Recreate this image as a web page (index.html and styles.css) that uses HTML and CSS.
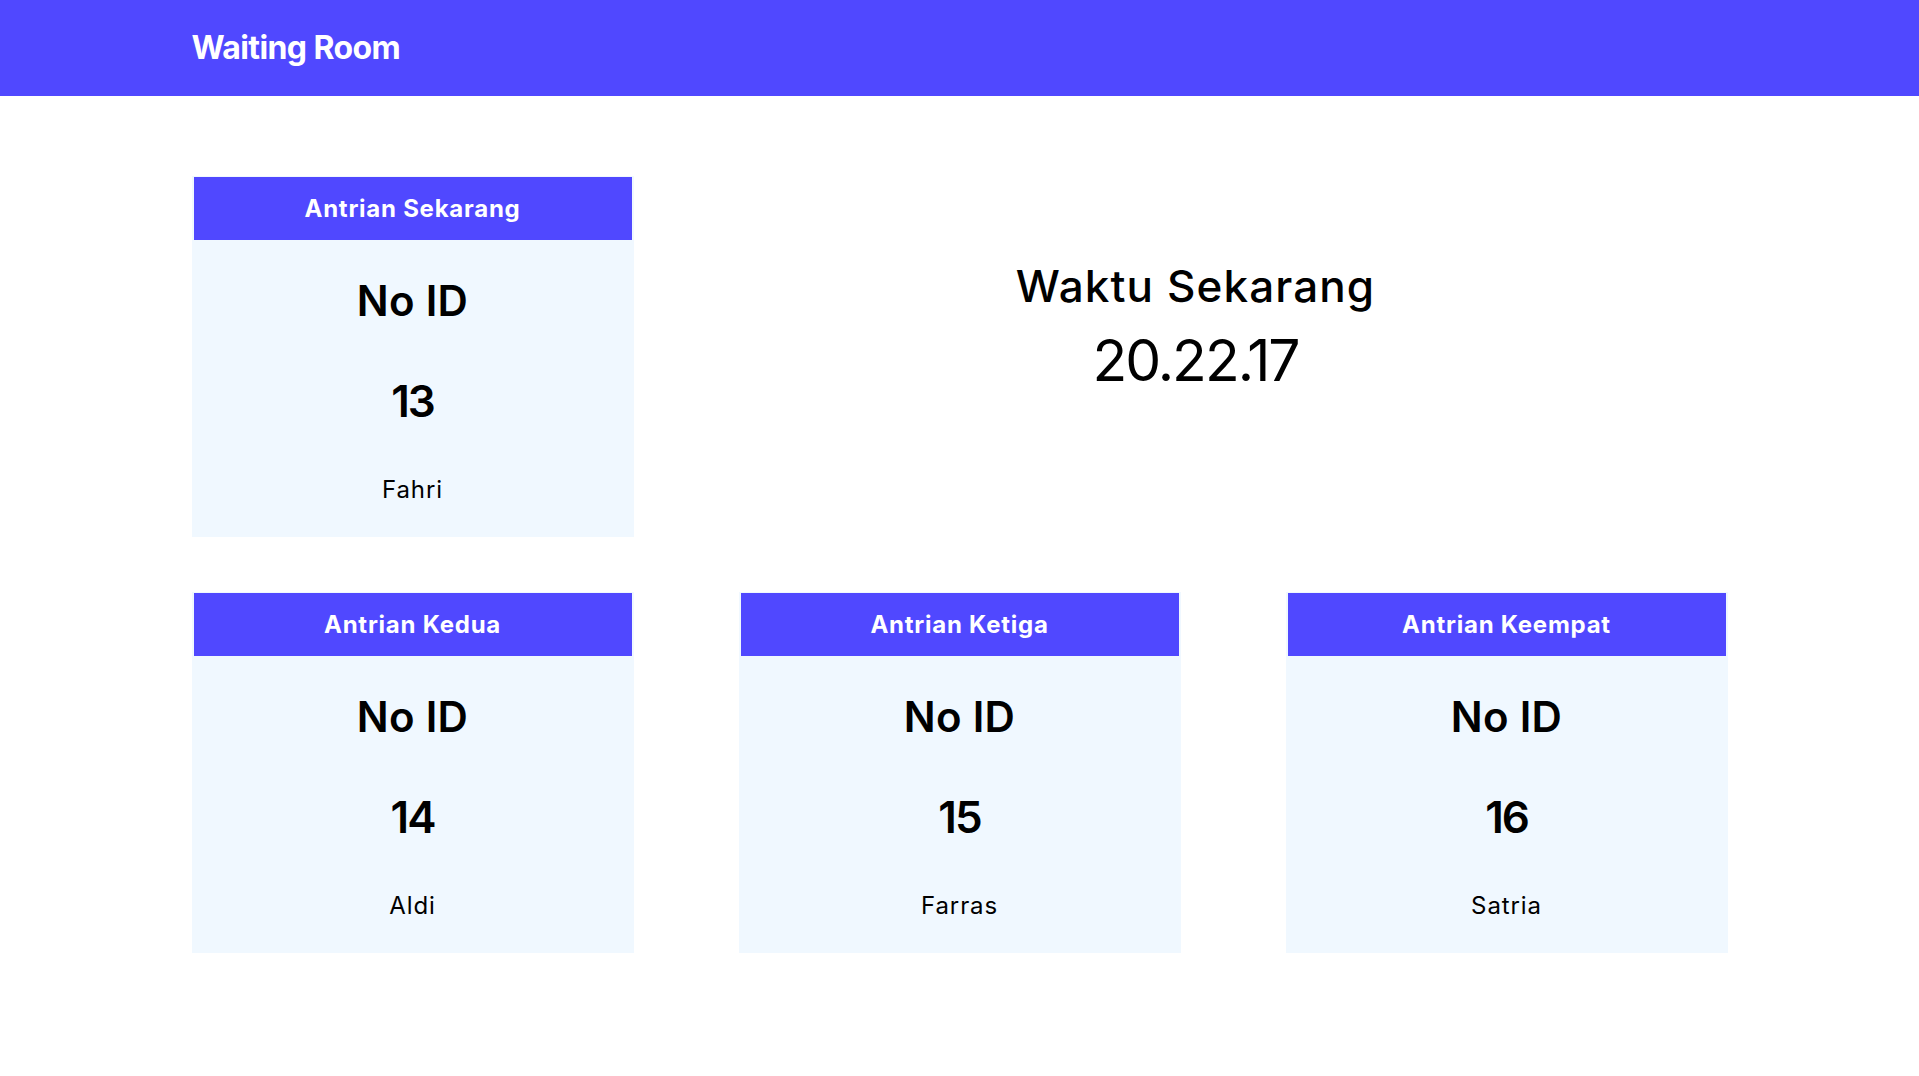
FILE: index.html
```html
<!DOCTYPE html>
<html lang="id">
<head>
<meta charset="utf-8">
<title>Waiting Room</title>
<link rel="stylesheet" href="styles.css">
</head>
<body>
<header class="topbar">
  <div class="container">
    <h1 class="brand">Waiting Room</h1>
  </div>
</header>
<main class="container">
  <section class="row-top">
    <div class="card">
      <div class="card-head">Antrian Sekarang</div>
      <div class="card-body">
        <div class="label">No ID</div>
        <div class="num">13</div>
        <div class="name">Fahri</div>
      </div>
    </div>
    <div class="clock">
      <div class="clock-title">Waktu Sekarang</div>
      <div class="clock-time">20.22.17</div>
    </div>
  </section>
  <section class="row-bottom">
    <div class="card">
      <div class="card-head">Antrian Kedua</div>
      <div class="card-body">
        <div class="label">No ID</div>
        <div class="num">14</div>
        <div class="name">Aldi</div>
      </div>
    </div>
    <div class="card">
      <div class="card-head">Antrian Ketiga</div>
      <div class="card-body">
        <div class="label">No ID</div>
        <div class="num">15</div>
        <div class="name">Farras</div>
      </div>
    </div>
    <div class="card">
      <div class="card-head">Antrian Keempat</div>
      <div class="card-body">
        <div class="label">No ID</div>
        <div class="num">16</div>
        <div class="name">Satria</div>
      </div>
    </div>
  </section>
</main>
</body>
</html>
```
FILE: styles.css
```css
* { box-sizing: border-box; }
html, body { margin: 0; padding: 0; }
body {
  font-family: Inter, "Open Sans", "DejaVu Sans", sans-serif;
  color: #000;
  background: #fff;
}
.container {
  width: 1536px;
  margin: 0 auto;
}
.topbar {
  background: #5048ff;
  height: 96px;
  display: flex;
  align-items: center;
}
.brand {
  margin: 0;
  font-size: 32px;
  line-height: 1;
  font-weight: 700;
  color: #fff;
  letter-spacing: -0.6px;
}
.row-top {
  margin-top: 80px;
  display: grid;
  grid-template-columns: 442px 1fr;
}
.row-bottom {
  margin-top: 55px;
  display: grid;
  grid-template-columns: repeat(3, 442px);
  justify-content: space-between;
}
.card {
  background: #f0f8ff;
  padding: 1px 2px 0;
  display: flex;
  flex-direction: column;
  text-align: center;
}
.card-head {
  background: #5048ff;
  color: #fff;
  height: 63px;
  display: flex;
  align-items: center;
  justify-content: center;
  font-size: 24px;
  line-height: 1;
  font-weight: 700;
  letter-spacing: 0.75px;
}
.card-body {
  padding: 40px 0 35px;
  display: flex;
  flex-direction: column;
  align-items: center;
}
.label {
  font-size: 42px;
  line-height: 1;
  font-weight: 600;
  letter-spacing: 0.3px;
}
.num {
  margin-top: 57px;
  font-size: 44px;
  line-height: 1;
  font-weight: 600;
  letter-spacing: -2px;
}
.name {
  margin-top: 55px;
  font-size: 24px;
  line-height: 1;
  font-weight: 400;
  letter-spacing: 0.9px;
}
.clock {
  padding-top: 88px;
  padding-left: 30px;
  text-align: center;
}
.clock-title {
  font-size: 44px;
  line-height: 1;
  font-weight: 500;
  letter-spacing: 1.1px;
}
.clock-time {
  margin-top: 24px;
  font-size: 57px;
  line-height: 1;
  font-weight: 400;
  letter-spacing: -2px;
}
```
